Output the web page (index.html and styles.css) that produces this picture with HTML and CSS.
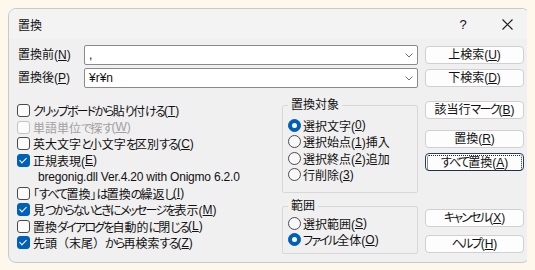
FILE: index.html
```html
<!DOCTYPE html>
<html lang="ja">
<head>
  <meta charset="UTF-8">
  <title>置換</title>
  <link rel="stylesheet" href="styles.css">
</head>
<body>
  <div class="dialog">
    <div class="titlebar">
      <span class="title">置換</span>
      <span class="tb-help">?</span>
      <span class="tb-close">
        <svg width="11" height="11" viewBox="0 0 11 11"><path d="M0.5 0.5L10.5 10.5M10.5 0.5L0.5 10.5" stroke="#1a1a1a" stroke-width="1.1" fill="none"/></svg>
      </span>
    </div>
    <div class="body">
      <div class="findrow">
        <span class="flabel">置換前(<u>N</u>)</span>
        <div class="combo">
          <span class="ctext">,</span>
          <svg class="chev" width="8" height="5" viewBox="0 0 8 5"><path d="M0.5 0.5L4 4L7.5 0.5" stroke="#707070" fill="none"/></svg>
        </div>
        <button class="btn top">上検索(<u>U</u>)</button>
      </div>
      <div class="findrow">
        <span class="flabel">置換後(<u>P</u>)</span>
        <div class="combo">
          <span class="ctext">¥r¥n</span>
          <svg class="chev" width="8" height="5" viewBox="0 0 8 5"><path d="M0.5 0.5L4 4L7.5 0.5" stroke="#707070" fill="none"/></svg>
        </div>
        <button class="btn top">下検索(<u>D</u>)</button>
      </div>

      <div class="lower">
        <div class="opts">
          <div class="row"><span class="chk"></span><span class="k">クリップボードから</span>貼<span class="k">り</span>付<span class="k">ける</span>(<u>T</u>)</div>
          <div class="row disabled"><span class="chk"></span>単語単位<span class="k">で</span>探<span class="k">す</span>(<u>W</u>)</div>
          <div class="row"><span class="chk"></span>英大文字<span class="k">と</span>小文字<span class="k">を</span>区別<span class="k">する</span>(<u>C</u>)</div>
          <div class="row"><span class="chk on"></span>正規表現(<u>E</u>)</div>
          <div class="row note">bregonig.dll Ver.4.20 with Onigmo 6.2.0</div>
          <div class="row"><span class="chk"></span>「<span class="k">すべて</span>置換」<span class="k">は</span>置換<span class="k">の</span>繰返<span class="k">し</span>(<u>I</u>)</div>
          <div class="row"><span class="chk on"></span>見<span class="k">つからないときにメッセージを</span>表示(<u>M</u>)</div>
          <div class="row"><span class="chk"></span>置換<span class="k">ダイアログを</span>自動的<span class="k">に</span>閉<span class="k">じる</span>(<u>L</u>)</div>
          <div class="row"><span class="chk on"></span>先頭<span class="fw">（</span>末尾<span class="fw">）</span><span class="k">から</span>再検索<span class="k">する</span>(<u>Z</u>)</div>
        </div>

        <div class="groups">
          <fieldset class="target">
            <legend>置換対象</legend>
            <div class="row"><span class="rad on"></span>選択文字(<u>0</u>)</div>
            <div class="row"><span class="rad"></span>選択始点(<u>1</u>)挿入</div>
            <div class="row"><span class="rad"></span>選択終点(<u>2</u>)追加</div>
            <div class="row"><span class="rad"></span>行削除(<u>3</u>)</div>
          </fieldset>
          <fieldset class="range">
            <legend>範囲</legend>
            <div class="row"><span class="rad"></span>選択範囲(<u>S</u>)</div>
            <div class="row"><span class="rad on"></span><span class="k">ファイル</span>全体(<u>O</u>)</div>
          </fieldset>
        </div>

        <div class="btns">
          <button class="btn mark">該当行<span class="k">マーク</span>(<u>B</u>)</button>
          <button class="btn replace">置換(<u>R</u>)</button>
          <button class="btn all default"><span class="focus"><span class="k">すべて</span>置換(<u>A</u>)</span></button>
          <button class="btn cancel"><span class="k">キャンセル</span>(<u>X</u>)</button>
          <button class="btn helpb"><span class="k">ヘルプ</span>(<u>H</u>)</button>
        </div>
      </div>
    </div>
  </div>
</body>
</html>
```

FILE: styles.css
```css
body {
  margin: 8px;
  background: #fdf8eb;
  font-family: "Liberation Sans", "Noto Sans CJK JP", sans-serif;
  font-size: 12px;
  font-feature-settings: "palt" 1;
  color: #111;
}
u { text-underline-offset: 1px; }
.k { letter-spacing: -1.8px; }
.fw { font-feature-settings: normal; }

.dialog {
  width: 520px;
  height: 253px;
  border: 1px solid #c9c9c9;
  border-radius: 8px;
  background: #f0f0f0;
  overflow: hidden;
}
.titlebar {
  height: 30px;
  display: flex;
  align-items: center;
  background: #f3f3f3;
  padding-left: 9px;
}
.title { flex: 1; }
.tb-help { width: 46px; text-align: center; font-size: 13px; }
.tb-close { width: 43px; display: flex; justify-content: center; }

.body { padding: 6px 5px 0 9px; }

.findrow {
  display: flex;
  align-items: flex-start;
  height: 20px;
  margin-bottom: 3px;
}
.flabel { width: 66px; line-height: 20px; }
.combo {
  width: 328px;
  height: 18px;
  border: 1px solid #8a8a8a;
  border-radius: 2px;
  background: #fff;
  display: flex;
  align-items: center;
  padding-left: 4px;
  margin-right: 7px;
}
.ctext { flex: 1; }
.chev { margin-right: 4px; }

.btn {
  display: block;
  width: 99px;
  height: 18px;
  padding: 0;
  border: 1px solid #d0d0d0;
  border-radius: 4px;
  background: #fdfdfd;
  font: inherit;
  color: #111;
  line-height: 16px;
}
.btn.top { margin-top: 1px; }
.btn.mark { margin-top: 10px; }
.btn.replace { margin-top: 11px; }
.btn.all { margin-top: 5px; }
.btn.cancel { margin-top: 38px; }
.btn.helpb { margin-top: 8px; }
.btn.default { border-color: #1f3f6b; padding: 1px; }
.btn .focus {
  display: block;
  height: 14px;
  line-height: 14px;
  border: 1px dotted #222;
  border-radius: 2px;
}

.lower { display: flex; align-items: flex-start; }
.opts { width: 264px; padding-top: 11.5px; }
.row {
  height: 16.5px;
  display: flex;
  align-items: center;
  white-space: nowrap;
}
.row.note { padding-left: 20px; letter-spacing: -0.2px; }
.row.disabled { color: #a0a0a0; }

.chk {
  width: 11px;
  height: 11px;
  border: 1px solid #4a4a4a;
  border-radius: 3px;
  background: #fbfbfb;
  margin: 0 3px 0 -1px;
  flex: none;
  position: relative;
}
.disabled .chk { border-color: #c4c4c4; }
.chk.on { background: #005fb8; border-color: #005fb8; }
.chk.on::after {
  content: "";
  position: absolute;
  left: 3px;
  top: 1px;
  width: 3px;
  height: 6px;
  border: solid #fff;
  border-width: 0 1px 1px 0;
  transform: rotate(45deg);
}

.groups { width: 136px; padding-top: 7px; }
fieldset {
  margin: 0;
  border: 1px solid #d8d8d8;
  border-radius: 2px;
  padding: 0 4px 9px 5px;
}
legend { padding: 0 3px; line-height: 14px; }
.target .row:first-of-type { margin-top: 5px; }
.range { margin-top: 6px; padding-bottom: 5px; }
.range .row:first-of-type { margin-top: 2px; }

.rad {
  width: 11px;
  height: 11px;
  border: 1px solid #4a4a4a;
  border-radius: 50%;
  background: #f8f8f8;
  margin-right: 2px;
  flex: none;
  position: relative;
}
.rad.on { background: #005fb8; border-color: #005fb8; }
.rad.on::after {
  content: "";
  position: absolute;
  left: 3px;
  top: 3px;
  width: 5px;
  height: 5px;
  border-radius: 50%;
  background: #fff;
}

.btns { width: 99px; margin-left: 7px; }
```
